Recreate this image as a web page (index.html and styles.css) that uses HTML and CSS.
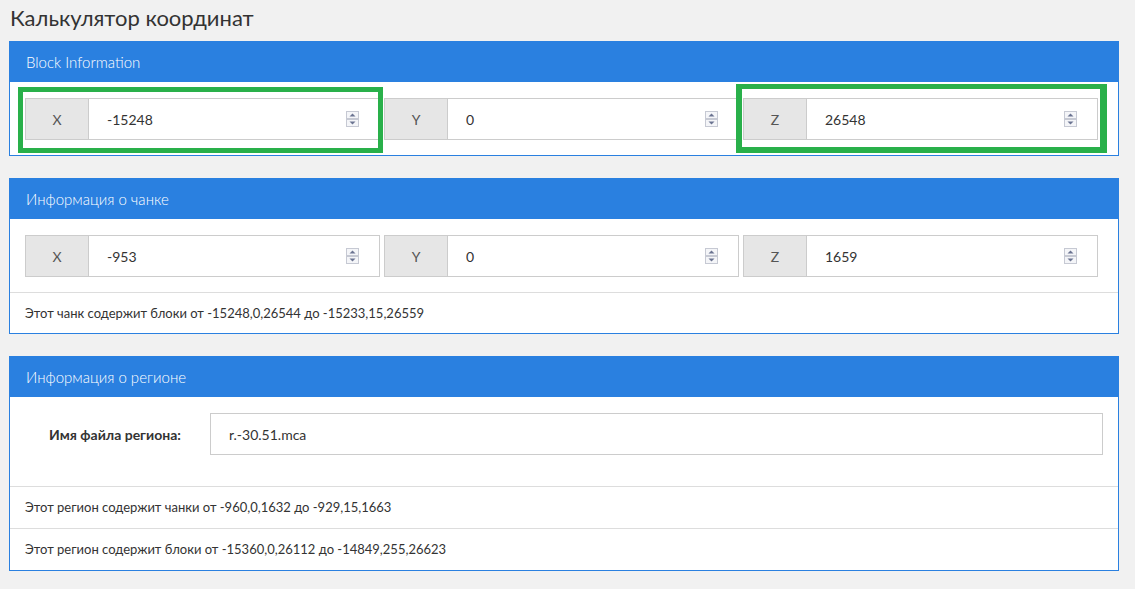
FILE: index.html
```html
<!DOCTYPE html>
<html>
<head>
<meta charset="utf-8">
<link rel="stylesheet" href="styles.css">
<title>Калькулятор координат</title>
</head>
<body>
  <h1 class="titulo">Калькулятор координат</h1>

  <div class="panel">
    <div class="panel-cabecera">Block Information</div>
    <div class="panel-cuerpo">
      <div class="fila-ejes">
        <div class="grupo">
          <span class="eje">X</span>
          <div class="caja"><input class="valor" type="text" value="-15248"><svg class="giro" width="13" height="16" viewBox="0 0 13 16"><rect x="0.5" y="0.5" width="12" height="7" fill="#f4f5f8" stroke="#c6c9d3"/><rect x="0.5" y="8.5" width="12" height="7" fill="#f4f5f8" stroke="#c6c9d3"/><path d="M3.5 5.5 L6.5 2.5 L9.5 5.5 Z" fill="#6b7491"/><path d="M3.5 10.5 L6.5 13.5 L9.5 10.5 Z" fill="#6b7491"/></svg></div>
          <div class="marca marca-x"></div>
        </div>
        <div class="grupo">
          <span class="eje">Y</span>
          <div class="caja"><input class="valor" type="text" value="0"><svg class="giro" width="13" height="16" viewBox="0 0 13 16"><rect x="0.5" y="0.5" width="12" height="7" fill="#f4f5f8" stroke="#c6c9d3"/><rect x="0.5" y="8.5" width="12" height="7" fill="#f4f5f8" stroke="#c6c9d3"/><path d="M3.5 5.5 L6.5 2.5 L9.5 5.5 Z" fill="#6b7491"/><path d="M3.5 10.5 L6.5 13.5 L9.5 10.5 Z" fill="#6b7491"/></svg></div>
        </div>
        <div class="grupo">
          <span class="eje">Z</span>
          <div class="caja"><input class="valor" type="text" value="26548"><svg class="giro" width="13" height="16" viewBox="0 0 13 16"><rect x="0.5" y="0.5" width="12" height="7" fill="#f4f5f8" stroke="#c6c9d3"/><rect x="0.5" y="8.5" width="12" height="7" fill="#f4f5f8" stroke="#c6c9d3"/><path d="M3.5 5.5 L6.5 2.5 L9.5 5.5 Z" fill="#6b7491"/><path d="M3.5 10.5 L6.5 13.5 L9.5 10.5 Z" fill="#6b7491"/></svg></div>
          <div class="marca marca-z"></div>
        </div>
      </div>
    </div>
  </div>

  <div class="panel">
    <div class="panel-cabecera">Информация о чанке</div>
    <div class="panel-cuerpo">
      <div class="fila-ejes">
        <div class="grupo">
          <span class="eje">X</span>
          <div class="caja"><input class="valor" type="text" value="-953"><svg class="giro" width="13" height="16" viewBox="0 0 13 16"><rect x="0.5" y="0.5" width="12" height="7" fill="#f4f5f8" stroke="#c6c9d3"/><rect x="0.5" y="8.5" width="12" height="7" fill="#f4f5f8" stroke="#c6c9d3"/><path d="M3.5 5.5 L6.5 2.5 L9.5 5.5 Z" fill="#6b7491"/><path d="M3.5 10.5 L6.5 13.5 L9.5 10.5 Z" fill="#6b7491"/></svg></div>
        </div>
        <div class="grupo">
          <span class="eje">Y</span>
          <div class="caja"><input class="valor" type="text" value="0"><svg class="giro" width="13" height="16" viewBox="0 0 13 16"><rect x="0.5" y="0.5" width="12" height="7" fill="#f4f5f8" stroke="#c6c9d3"/><rect x="0.5" y="8.5" width="12" height="7" fill="#f4f5f8" stroke="#c6c9d3"/><path d="M3.5 5.5 L6.5 2.5 L9.5 5.5 Z" fill="#6b7491"/><path d="M3.5 10.5 L6.5 13.5 L9.5 10.5 Z" fill="#6b7491"/></svg></div>
        </div>
        <div class="grupo">
          <span class="eje">Z</span>
          <div class="caja"><input class="valor" type="text" value="1659"><svg class="giro" width="13" height="16" viewBox="0 0 13 16"><rect x="0.5" y="0.5" width="12" height="7" fill="#f4f5f8" stroke="#c6c9d3"/><rect x="0.5" y="8.5" width="12" height="7" fill="#f4f5f8" stroke="#c6c9d3"/><path d="M3.5 5.5 L6.5 2.5 L9.5 5.5 Z" fill="#6b7491"/><path d="M3.5 10.5 L6.5 13.5 L9.5 10.5 Z" fill="#6b7491"/></svg></div>
        </div>
      </div>
    </div>
    <div class="linea">Этот чанк содержит блоки от -15248,0,26544 до -15233,15,26559</div>
  </div>

  <div class="panel">
    <div class="panel-cabecera">Информация о регионе</div>
    <div class="panel-cuerpo cuerpo-region">
      <div class="fila-archivo">
        <label class="etiqueta">Имя файла региона:</label>
        <input class="archivo" type="text" value="r.-30.51.mca">
      </div>
    </div>
    <div class="linea linea-region">Этот регион содержит чанки от -960,0,1632 до -929,15,1663</div>
    <div class="linea linea-region">Этот регион содержит блоки от -15360,0,26112 до -14849,255,26623</div>
  </div>
</body>
</html>
```

FILE: styles.css
```css
body {
  margin: 0;
  padding: 0 16px 0 9px;
  background-color: #f1f1f1;
  color: #333333;
  font-family: Lato, "Open Sans", sans-serif;
  font-size: 13px;
}

.titulo {
  margin: 0;
  padding: 4px 0 0 1px;
  height: 41px;
  box-sizing: border-box;
  font-size: 22px;
  font-weight: normal;
  color: #333333;
}

.panel {
  background-color: #ffffff;
  border: 1px solid #2a80e0;
  margin-bottom: 22px;
}

.panel-cabecera {
  background-color: #2a80e0;
  color: #ffffff;
  height: 40px;
  line-height: 40px;
  padding-left: 16px;
  font-size: 15px;
  font-weight: 300;
}

.panel-cuerpo {
  padding: 16px 20px 15px 15px;
}

.fila-ejes {
  display: grid;
  grid-template-columns: 1fr 1fr 1fr;
  gap: 4px;
}

.grupo {
  position: relative;
  display: flex;
  height: 42px;
}

.eje {
  width: 62px;
  flex-shrink: 0;
  background-color: #e6e6e6;
  border: 1px solid #cccccc;
  border-right: none;
  color: #555555;
  font-size: 14px;
  display: flex;
  align-items: center;
  justify-content: center;
}

.caja {
  flex: 1;
  display: flex;
  align-items: center;
  border: 1px solid #cccccc;
  padding-right: 20px;
}

.valor {
  flex: 1;
  min-width: 0;
  border: none;
  outline: none;
  background: transparent;
  padding: 0 0 0 18px;
  font-family: Lato, "Open Sans", sans-serif;
  font-size: 14px;
  color: #333333;
}

.giro {
  display: block;
}

.marca {
  position: absolute;
  border: 5px solid #29b04a;
  pointer-events: none;
}

.marca-x {
  top: -11px;
  left: -7px;
  right: -3px;
  bottom: -13px;
}

.marca-z {
  top: -14px;
  left: -7px;
  right: -9px;
  bottom: -13px;
  border-width: 5px 7px 6px 6px;
}

.linea {
  border-top: 1px solid #dddddd;
  height: 40px;
  line-height: 40px;
  padding-left: 15px;
}

.linea-region {
  height: 41px;
  line-height: 41px;
}

.cuerpo-region {
  padding-right: 15px;
  padding-bottom: 31px;
}

.fila-archivo {
  display: flex;
  align-items: center;
}

.etiqueta {
  width: 180px;
  flex-shrink: 0;
  text-align: center;
  font-size: 14px;
  font-weight: bold;
  margin-right: 5px;
}

.archivo {
  flex: 1;
  min-width: 0;
  height: 42px;
  box-sizing: border-box;
  border: 1px solid #cccccc;
  outline: none;
  padding: 0 18px;
  font-family: Lato, "Open Sans", sans-serif;
  font-size: 14px;
  color: #333333;
}
```
